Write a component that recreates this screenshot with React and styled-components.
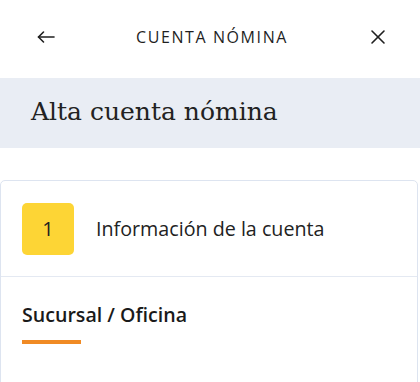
import React from 'react';
import styled, { createGlobalStyle } from 'styled-components';

const GlobalStyle = createGlobalStyle`
  html, body {
    margin: 0;
    padding: 0;
    background: #ffffff;
  }
  body {
    font-family: "Open Sans", "Noto Sans", sans-serif;
    color: #222222;
  }
`

const BackIcon = () => (
  <svg width="20" height="14" viewBox="0 0 20 14" fill="none" stroke="#1f1f1f" strokeWidth="1.6" strokeLinecap="round" strokeLinejoin="round">
    <path d="M18 7H2.5" />
    <path d="M7.5 2L2.5 7l5 5" />
  </svg>
)

const CloseIcon = () => (
  <svg width="16" height="16" viewBox="0 0 16 16" fill="none" stroke="#1f1f1f" strokeWidth="1.6" strokeLinecap="round">
    <path d="M2 2l12 12" />
    <path d="M14 2L2 14" />
  </svg>
)

const App = () => {
  return (
    <Page>
      <GlobalStyle />
      <TopBar>
        <IconButton type='button' aria-label='Volver'><BackIcon /></IconButton>
        <TopTitle>CUENTA NÓMINA</TopTitle>
        <IconButton type='button' aria-label='Cerrar'><CloseIcon /></IconButton>
      </TopBar>
      <Banner>
        <BannerTitle>Alta cuenta nómina</BannerTitle>
      </Banner>
      <Card>
        <StepRow>
          <StepBadge>1</StepBadge>
          <StepLabel>Información de la cuenta</StepLabel>
        </StepRow>
        <Section>
          <SectionTitle>Sucursal / Oficina</SectionTitle>
          <Underline />
        </Section>
      </Card>
    </Page>
  )
}

const Page = styled.div`
  width: 420px;
  height: 382px;
  overflow: hidden;
  background: #ffffff;
`

const TopBar = styled.header`
  height: 78px;
  display: flex;
  align-items: center;
  justify-content: space-between;
  padding: 0 31px 4px 35px;
  box-sizing: border-box;
`

const IconButton = styled.button`
  background: none;
  border: 0;
  padding: 0;
  display: flex;
  align-items: center;
  justify-content: center;
  width: 22px;
  height: 22px;
  cursor: pointer;
`

const TopTitle = styled.h1`
  margin: 0;
  font-size: 16px;
  font-weight: 400;
  letter-spacing: 1.6px;
  color: #1f1f1f;
`

const Banner = styled.div`
  height: 70px;
  background: #e9edf4;
  display: flex;
  align-items: center;
  padding-left: 31px;
`

const BannerTitle = styled.h2`
  margin: 0 0 4px;
  font-family: "DejaVu Serif", "Liberation Serif", serif;
  font-size: 25px;
  font-weight: 400;
  color: #222222;
`

const Card = styled.section`
  margin: 32px 2px 0 0;
  border: 1px solid #dde4f0;
  border-radius: 5px;
  background: #ffffff;
  height: 240px;
`

const StepRow = styled.div`
  display: flex;
  align-items: center;
  gap: 22px;
  height: 95px;
  padding-left: 21px;
  border-bottom: 1px solid #e4e9f2;
`

const StepBadge = styled.div`
  width: 52px;
  height: 52px;
  border-radius: 5px;
  background: #fdd535;
  display: flex;
  align-items: center;
  justify-content: center;
  font-size: 20px;
  color: #222222;
`

const StepLabel = styled.span`
  font-size: 19.7px;
  color: #222222;
`

const Section = styled.div`
  padding: 24px 21px 0;
`

const SectionTitle = styled.h3`
  margin: 0;
  font-size: 19.6px;
  font-weight: 600;
  color: #1a1a1a;
`

const Underline = styled.div`
  width: 59px;
  height: 4px;
  background: #f08a24;
  margin-top: 12px;
`

export default App
